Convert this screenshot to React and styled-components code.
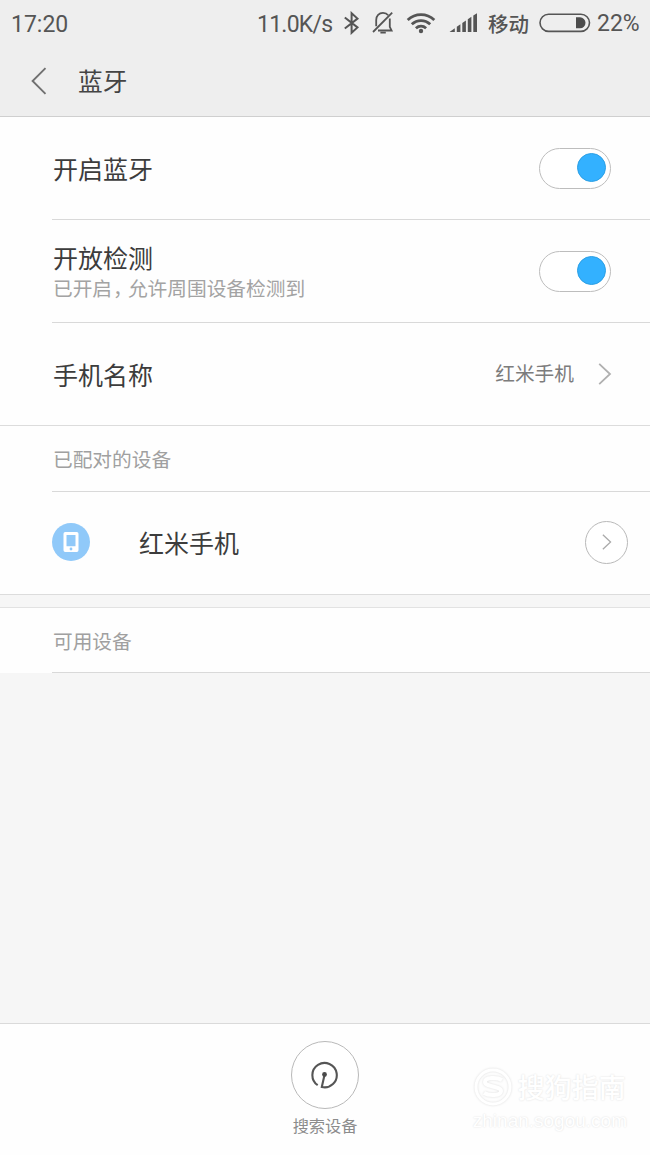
import styled, {createGlobalStyle} from "styled-components"

const GlobalStyle = createGlobalStyle`
  *, *::after {
    box-sizing: border-box;
  }

  body {
    margin: 0;
    background: #f6f6f6;
    color: #3c3c3c;
    font-family: Roboto, "Noto Sans CJK SC", sans-serif;
  }

  svg {
    display: block;
    flex-shrink: 0;
  }
`

const Screen = styled.div`
  display: flex;
  flex-direction: column;
  width: 650px;
  height: 1155px;
  overflow: hidden;
`

const Header = styled.header`
  height: 117px;
  background: #eeeeee;
  border-bottom: 1px solid #cfcfcf;
`

const StatusBar = styled.div`
  display: flex;
  align-items: center;
  height: 46px;
  padding: 0 11px;
  color: #555555;
  font-size: 23px;
  line-height: 46px;
  white-space: nowrap;
`

const Time = styled.span`
  flex: 1;
  padding-top: 3px;
`

const StatusText = styled.span`
  width: ${({$width}) => $width}px;
  margin-left: ${({$left}) => $left || 0}px;
  padding-top: ${({$top}) => $top || 0}px;
  font-size: ${({$size}) => $size || 23}px;
  font-weight: ${({$weight}) => $weight || 400};
  letter-spacing: ${({$spacing}) => $spacing || 0}px;
`

const StatusIcon = styled.span`
  margin-left: ${({$left}) => $left}px;
`

const TitleBar = styled.div`
  display: flex;
  align-items: center;
  gap: 31px;
  height: 70px;
  padding-left: 31px;
`

const Title = styled.h1`
  margin: 0;
  padding-top: 3px;
  color: #444444;
  font-size: 24.7px;
  font-weight: 400;
  line-height: 36px;
`

const Group = styled.section`
  background: #fefefe;
  border-bottom: ${({$border}) => $border ? "1px solid #dcdcdc" : "none"};
`

const Row = styled.div`
  display: flex;
  align-items: center;
  justify-content: space-between;
  height: ${({$last}) => $last ? 102 : 103}px;
  margin-left: 52px;
  padding-right: ${({$right}) => $right || 39}px;
  padding-bottom: ${({$bottom}) => $bottom || 0}px;
  border-bottom: ${({$last}) => $last ? "none" : "1px solid #d9d9d9"};
`

const Label = styled.div`
  padding: ${({$top}) => $top || 5}px 0 0 1px;
  font-size: 25px;
  line-height: 34px;
`

const Hint = styled.div`
  color: #a3a3a3;
  font-size: 19.7px;
  line-height: 26px;
`

const Comma = styled.span`
  margin: 0 5px 0 1px;
  font-feature-settings: "halt";
`

const Switch = styled.div`
  display: flex;
  align-items: center;
  justify-content: flex-end;
  width: 72px;
  height: 41px;
  padding: 0 4px 1px 0;
  border: 1px solid #bdbdbd;
  border-radius: 21px;
  background: #ffffff;

  &::after {
    content: "";
    width: 29px;
    height: 29px;
    border: 1px solid #2c9fe4;
    border-radius: 50%;
    background: #33b1ff;
  }
`

const Value = styled.div`
  display: flex;
  align-items: center;
  gap: 24px;
  margin-right: -1px;
  color: #7c7c7c;
  font-size: 19.7px;
  line-height: 28px;

  span {
    padding-top: 2px;
  }
`

const SectionTitle = styled.h2`
  height: ${({$height}) => $height}px;
  margin: 0 0 0 52px;
  padding: 1px 0 0 1px;
  border-bottom: 1px solid #d9d9d9;
  color: #a0a0a0;
  font-size: 19.7px;
  font-weight: 400;
  line-height: 67px;
`

const Device = styled.div`
  display: flex;
  align-items: center;
  gap: 48px;
`

const DeviceBadge = styled.div`
  display: flex;
  align-items: center;
  justify-content: center;
  width: 38px;
  height: 38px;
  border-radius: 50%;
  background: #90c9f9;
`

const RoundButton = styled.div`
  display: flex;
  align-items: center;
  justify-content: center;
  width: ${({$size}) => $size}px;
  height: ${({$size}) => $size}px;
  border: 1px solid #b9b9b9;
  border-radius: 50%;
  background: #ffffff;
`

const Divider = styled.div`
  height: 13px;
  background: #f6f6f6;
  border-bottom: 1px solid #e2e2e2;
`

const Footer = styled.footer`
  display: grid;
  grid-template-columns: 1fr 70px 1fr;
  height: 132px;
  margin-top: auto;
  padding-top: 17px;
  border-top: 1px solid #dadada;
  background: #fefefe;
`

const Search = styled.div`
  display: flex;
  flex-direction: column;
  align-items: center;
  grid-column: 2;
  color: #8c8c8c;
  font-size: 16.2px;
  line-height: 24px;
  white-space: nowrap;

  span {
    margin-top: 6px;
  }
`

const Watermark = styled.div`
  justify-self: end;
  padding: 25px 23px 0 0;
  color: #ffffff;
  font-family: "Liberation Sans", "Noto Sans CJK SC", sans-serif;
  font-size: 19px;
  line-height: 26px;
  text-shadow: 0 0 2px #dcdcdc;
  white-space: nowrap;
`

const Brand = styled.div`
  display: flex;
  align-items: center;
  gap: 5px;
  height: 42px;
  font-size: 27px;
  font-weight: 500;
  line-height: 42px;

  svg {
    filter: drop-shadow(0 0 1px #dcdcdc);
  }

  span {
    padding-top: 3px;
  }
`

const BluetoothIcon = () => (
    <svg width="17" height="24" viewBox="0 0 17 24" fill="none" stroke="#555" strokeWidth="2">
        <path d="M1.8 6.5 14.5 16.4 8.6 21.8V2.2l5.9 5.4L1.8 17.5"/>
    </svg>
)

const MuteIcon = () => (
    <svg width="22" height="24" viewBox="0 0 22 24" fill="none" stroke="#555" strokeWidth="1.8">
        <path d="M4.2 15.2V9C4.2 4.6 7 1.9 11 1.9c2.2 0 4 .8 5.2 2.3M17.8 7.6v8.2l1.8 3.7H6"/>
        <path d="M1 21 20.2 1.6"/>
        <path d="M8.4 21.6h5.4"/>
    </svg>
)

const WifiIcon = () => (
    <svg width="30" height="22" viewBox="0 0 30 22" fill="none" stroke="#555" strokeWidth="2.8">
        <path d="M1.7 8.1c7.6-7.2 19-7.2 26.6 0M5.8 12.3c5.3-5 13.1-5 18.4 0M9.9 16.2c3-2.6 7.2-2.6 10.2 0"/>
        <circle cx="15" cy="19" r="2.2" fill="#555" stroke="none"/>
    </svg>
)

const SignalIcon = () => (
    <svg width="29" height="20" viewBox="0 0 29 20" fill="#555">
        <path d="M.5 19 5.8 15.2V19zM7.8 13.8l3.6-2.5V19H7.8zM13.3 10l3.6-2.5V19h-3.6zM18.8 6.3l3.6-2.5V19h-3.6zM24.3 2.5 28 .2V19h-3.7z"/>
    </svg>
)

const BatteryIcon = () => (
    <svg width="52" height="20" viewBox="0 0 52 20">
        <rect x="1" y="1.2" width="49.5" height="17.2" rx="8.6" fill="none" stroke="#555" strokeWidth="1.6"/>
        <path d="M37 4.3h4a5.5 5.5 0 0 1 0 11h-4z" fill="#4c4c4c"/>
    </svg>
)

const BackIcon = () => (
    <svg width="16" height="28" viewBox="0 0 16 28" fill="none" stroke="#707070" strokeWidth="1.9">
        <path d="M14.5 1.2 1.6 14l12.9 12.8"/>
    </svg>
)

const ArrowIcon = ({width, height, color}) => (
    <svg width={width} height={height} viewBox="0 0 14 22" fill="none" stroke={color} strokeWidth="1.8">
        <path d="M1.2.8 12 11 1.2 21.2"/>
    </svg>
)

const PhoneIcon = () => (
    <svg width="16" height="20" viewBox="0 0 16 20">
        <path
            d="M2.2 0h11.6Q15.5 0 15.5 1.7v16.6q0 1.7-1.7 1.7H2.2Q.5 20 .5 18.3V1.7Q.5 0 2.2 0ZM3.5 3v11.2h9V3Z"
            fill="#fff" fillRule="evenodd"/>
        <circle cx="8" cy="17" r="1.4" fill="#90c9f9"/>
    </svg>
)

const RadarIcon = () => (
    <svg width="28" height="28" viewBox="0.5 0 28 28" fill="none" stroke="#555" strokeWidth="2.1">
        <path d="M7.2 24.2A12.2 12.2 0 1 1 11.3 26L14 14"/>
        <circle cx="14" cy="13.5" r="2.4" fill="#4a4a4a" stroke="none"/>
    </svg>
)

const SogouIcon = () => (
    <svg width="40" height="40" viewBox="0 0 40 40" fill="none" stroke="#fff" strokeWidth="3">
        <circle cx="20" cy="20" r="17"/>
        <path d="M29 13c-5-3-17-3-17 2 0 5 16 4 16 9 0 5-12 5-17 2" strokeWidth="4"/>
    </svg>
)

const App = () => {
    return (<>
        <GlobalStyle/>
        <Screen>
            <Header>
                <StatusBar>
                    <Time>17:20</Time>
                    <StatusText $width={76} $top={3} $spacing={-.75}>11.0K/s</StatusText>
                    <StatusIcon $left={10}><BluetoothIcon/></StatusIcon>
                    <StatusIcon $left={12}><MuteIcon/></StatusIcon>
                    <StatusIcon $left={12}><WifiIcon/></StatusIcon>
                    <StatusIcon $left={13}><SignalIcon/></StatusIcon>
                    <StatusText $width={41} $left={10} $top={3} $size={20.5} $weight={500}>移动</StatusText>
                    <StatusIcon $left={10}><BatteryIcon/></StatusIcon>
                    <StatusText $width={42} $left={6} $top={1}>22%</StatusText>
                </StatusBar>
                <TitleBar>
                    <BackIcon/>
                    <Title>蓝牙</Title>
                </TitleBar>
            </Header>
            <Group $border>
                <Row>
                    <Label>开启蓝牙</Label>
                    <Switch/>
                </Row>
                <Row>
                    <Label $top={3}>
                        开放检测
                        <Hint>已开启<Comma>，</Comma>允许周围设备检测到</Hint>
                    </Label>
                    <Switch/>
                </Row>
                <Row $last>
                    <Label>手机名称</Label>
                    <Value>
                        <span>红米手机</span>
                        <ArrowIcon width={14} height={22} color="#b0b0b0"/>
                    </Value>
                </Row>
            </Group>
            <Group $border>
                <SectionTitle $height={66}>已配对的设备</SectionTitle>
                <Row $last $right={22} $bottom={2}>
                    <Device>
                        <DeviceBadge><PhoneIcon/></DeviceBadge>
                        <Label>红米手机</Label>
                    </Device>
                    <RoundButton $size={43}>
                        <ArrowIcon width={10} height={16} color="#aaa"/>
                    </RoundButton>
                </Row>
            </Group>
            <Divider/>
            <Group>
                <SectionTitle $height={65}>可用设备</SectionTitle>
            </Group>
            <Footer>
                <Search>
                    <RoundButton $size={68}><RadarIcon/></RoundButton>
                    <span>搜索设备</span>
                </Search>
                <Watermark>
                    <Brand>
                        <SogouIcon/>
                        <span>搜狗指南</span>
                    </Brand>
                    zhinan.sogou.com
                </Watermark>
            </Footer>
        </Screen>
    </>);
}

export default App
